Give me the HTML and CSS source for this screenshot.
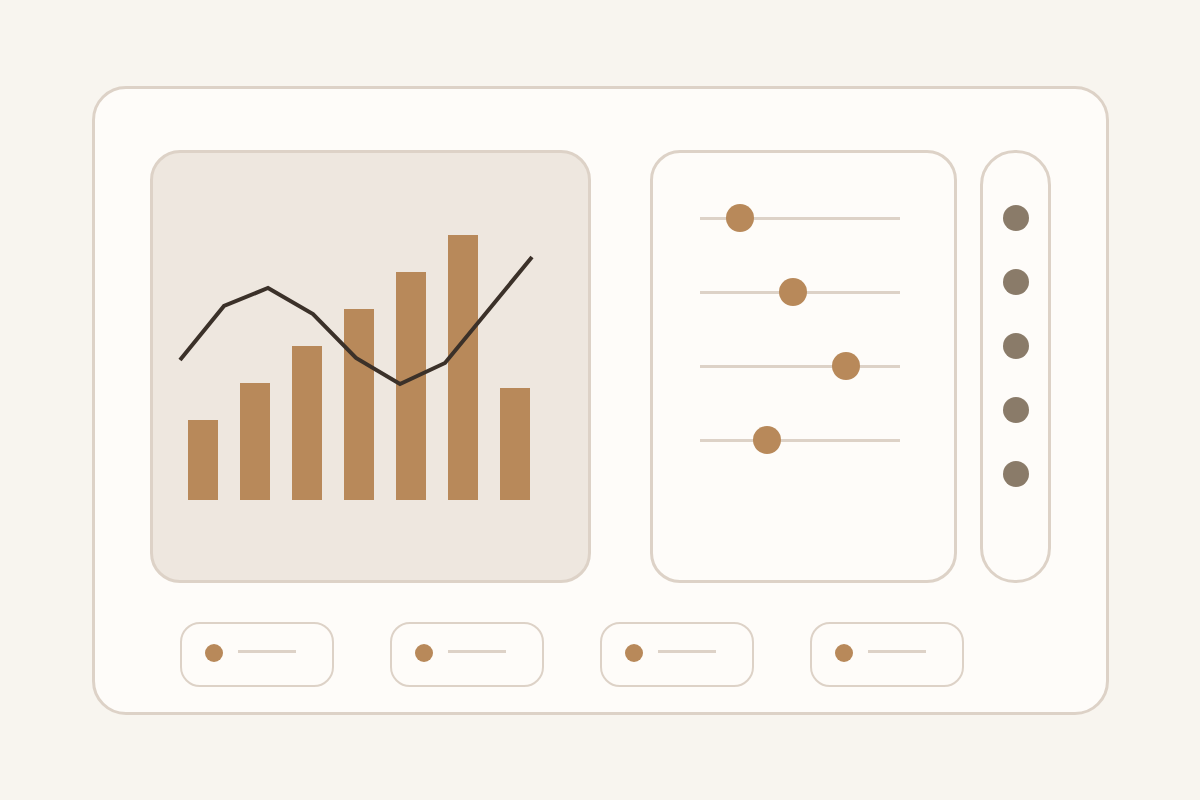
FILE: index.html
```html
<!DOCTYPE html>
<html>
<head>
<meta charset="utf-8">
<link rel="stylesheet" href="styles.css">
</head>
<body>
<div class="card">
  <div class="top-row">
    <div class="panel chart">
      <svg class="chart-svg" width="435" height="427" viewBox="3 3 435 427">
        <g fill="#b8895a">
          <rect x="38" y="270" width="30" height="80"/>
          <rect x="90" y="233" width="30" height="117"/>
          <rect x="142" y="196" width="30" height="154"/>
          <rect x="194" y="159" width="30" height="191"/>
          <rect x="246" y="122" width="30" height="228"/>
          <rect x="298" y="85" width="30" height="265"/>
          <rect x="350" y="238" width="30" height="112"/>
        </g>
        <polyline points="30,210 74,156 118,138 163,164 206,208 250,234 295,213 382,107" fill="none" stroke="#3b3129" stroke-width="4" stroke-linejoin="miter"/>
      </svg>
    </div>
    <div class="panel sliders">
      <div class="slider"><div class="track"></div><div class="knob" style="left: 26px"></div></div>
      <div class="slider"><div class="track"></div><div class="knob" style="left: 79px"></div></div>
      <div class="slider"><div class="track"></div><div class="knob" style="left: 132px"></div></div>
      <div class="slider"><div class="track"></div><div class="knob" style="left: 53px"></div></div>
    </div>
    <div class="panel dots">
      <div class="dot"></div>
      <div class="dot"></div>
      <div class="dot"></div>
      <div class="dot"></div>
      <div class="dot"></div>
    </div>
  </div>
  <div class="pill-row">
    <div class="pill"><span class="pill-dot"></span><span class="pill-line"></span></div>
    <div class="pill"><span class="pill-dot"></span><span class="pill-line"></span></div>
    <div class="pill"><span class="pill-dot"></span><span class="pill-line"></span></div>
    <div class="pill"><span class="pill-dot"></span><span class="pill-line"></span></div>
  </div>
</div>
</body>
</html>
```

FILE: styles.css
```css
html, body {
  margin: 0;
  padding: 0;
  background: #f8f5ef;
  font-family: "Liberation Sans", Arial, sans-serif;
}
body {
  width: 1200px;
  height: 800px;
  overflow: hidden;
}
.card {
  box-sizing: border-box;
  margin: 86px 0 0 92px;
  width: 1017px;
  height: 629px;
  border: 3px solid #ddd2c7;
  border-radius: 34px;
  background: #fefcf9;
  padding: 61px 0 0 55px;
}
.top-row {
  display: flex;
  height: 433px;
}
.panel {
  box-sizing: border-box;
  border: 3px solid #ddd2c7;
  border-radius: 30px;
  height: 433px;
}
.chart {
  width: 441px;
  background: #eee7df;
  overflow: hidden;
}
.chart-svg {
  display: block;
}
.sliders {
  width: 307px;
  margin-left: 59px;
  padding: 51px 0 0 47px;
  display: flex;
  flex-direction: column;
  gap: 46px;
}
.slider {
  position: relative;
  width: 200px;
  height: 28px;
  display: flex;
  align-items: center;
}
.track {
  width: 200px;
  height: 3px;
  background: #ddd2c7;
}
.knob {
  position: absolute;
  top: 0;
  width: 28px;
  height: 28px;
  border-radius: 50%;
  background: #b8895a;
}
.dots {
  width: 71px;
  margin-left: 23px;
  border-radius: 35px;
  padding-top: 52px;
  display: flex;
  flex-direction: column;
  align-items: center;
  gap: 38px;
}
.dot {
  width: 26px;
  height: 26px;
  border-radius: 50%;
  background: #8a7b69;
}
.pill-row {
  display: flex;
  gap: 56px;
  margin: 39px 0 0 30px;
}
.pill {
  box-sizing: border-box;
  width: 154px;
  height: 65px;
  border: 2px solid #ddd2c7;
  border-radius: 20px;
  display: flex;
  align-items: center;
  padding-left: 23px;
}
.pill-dot {
  width: 18px;
  height: 18px;
  margin-top: -3px;
  border-radius: 50%;
  background: #b8895a;
}
.pill-line {
  width: 58px;
  height: 3px;
  margin-left: 15px;
  margin-top: -7px;
  background: #ddd2c7;
}
```
